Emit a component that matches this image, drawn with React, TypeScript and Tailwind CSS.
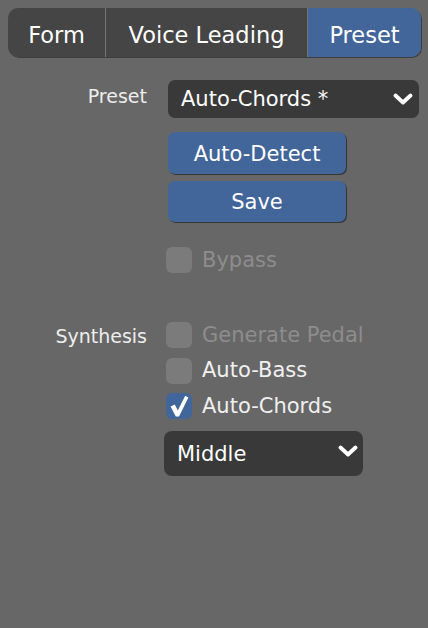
import React from "react";

function Chevron() {
  return (
    <svg width="20" height="12" viewBox="0 0 20 12" fill="none">
      <polyline
        points="2.5,2.5 10,9.5 17.5,2.5"
        stroke="white"
        strokeWidth="3.8"
        strokeLinecap="round"
        strokeLinejoin="round"
      />
    </svg>
  );
}

function Checkbox({
  label,
  checked = false,
  disabled = false,
}: {
  label: string;
  checked?: boolean;
  disabled?: boolean;
}) {
  return (
    <div className="flex items-center h-[26px] gap-[10px]">
      <div
        className={
          checked
            ? "w-[26px] h-[26px] rounded-[6px] bg-[#41669b] flex items-center justify-center"
            : "w-[26px] h-[26px] rounded-[6px] bg-[#7b7b7b]"
        }
      >
        {checked && (
          <svg width="26" height="26" viewBox="0 0 26 26">
            <polygon points="4.6,13.4 8.8,11.6 11.8,17.4 19.2,2.8 22.4,4.4 13,23.4 9.8,23.4" fill="white" />
          </svg>
        )}
      </div>
      <span className={disabled ? "text-[21px] text-[#8d8d8d]" : "text-[21px] text-[#f0f0f0]"}>
        {label}
      </span>
    </div>
  );
}

export default function App() {
  return (
    <div className="w-[428px] h-[628px] bg-[#676767] font-['DejaVu_Sans',sans-serif] leading-none overflow-hidden">
      {/* tabs */}
      <div className="pt-2 pl-2 pr-[7px]">
        <div className="flex h-[49px] rounded-[10px] overflow-hidden shadow-[1px_1px_0_#3e3e3e] text-[22.5px] text-white">
          <div className="w-[98px] flex items-center justify-center pt-[5px] bg-[#454545] border-r border-[#767676]">
            Form
          </div>
          <div className="w-[202px] flex items-center justify-center pt-[5px] bg-[#454545] border-r border-[#767676]">
            Voice Leading
          </div>
          <div className="flex-1 flex items-center justify-center pt-[5px] bg-[#42669a]">
            Preset
          </div>
        </div>
      </div>

      {/* preset */}
      <div className="flex mt-[23px]">
        <div className="w-[147px] h-[38px] flex items-center justify-end pb-[6px] text-[19px] text-[#ededed]">
          Preset
        </div>
        <div className="ml-[21px] w-[251px] h-[38px] rounded-[7px] bg-[#393939] flex items-center justify-between pl-[13px] pr-[6px] text-[21px] text-white">
          <span className="pt-[1px]">Auto-Chords *</span>
          <Chevron />
        </div>
      </div>

      <div className="ml-[168px] mt-[14px] flex flex-col gap-[7px]">
        <button className="w-[178px] h-[42px] rounded-[7px] bg-[#42659a] shadow-[1px_1px_0_#353535] text-[21px] text-white pt-[2px]">
          Auto-Detect
        </button>
        <button className="w-[178px] h-[41px] rounded-[7px] bg-[#42659a] shadow-[1px_1px_0_#353535] text-[21px] text-white pt-[2px]">
          Save
        </button>
      </div>

      <div className="ml-[166px] mt-[25px]">
        <Checkbox label="Bypass" disabled />
      </div>

      {/* synthesis */}
      <div className="flex mt-[49px]">
        <div className="w-[147px] h-[26px] flex items-center justify-end pt-[3px] text-[19px] text-[#ededed]">
          Synthesis
        </div>
        <div className="ml-[19px] flex flex-col gap-[9.5px]">
          <Checkbox label="Generate Pedal" disabled />
          <Checkbox label="Auto-Bass" />
          <Checkbox label="Auto-Chords" checked />
        </div>
      </div>

      <div className="ml-[164px] mt-[12px] w-[199px] h-[45px] rounded-[8px] bg-[#393939] flex items-center justify-between pl-[13px] pr-[5px] text-[21px] text-white">
        <span className="pt-[2px]">Middle</span>
        <div className="pb-[5px]">
          <Chevron />
        </div>
      </div>
    </div>
  );
}
